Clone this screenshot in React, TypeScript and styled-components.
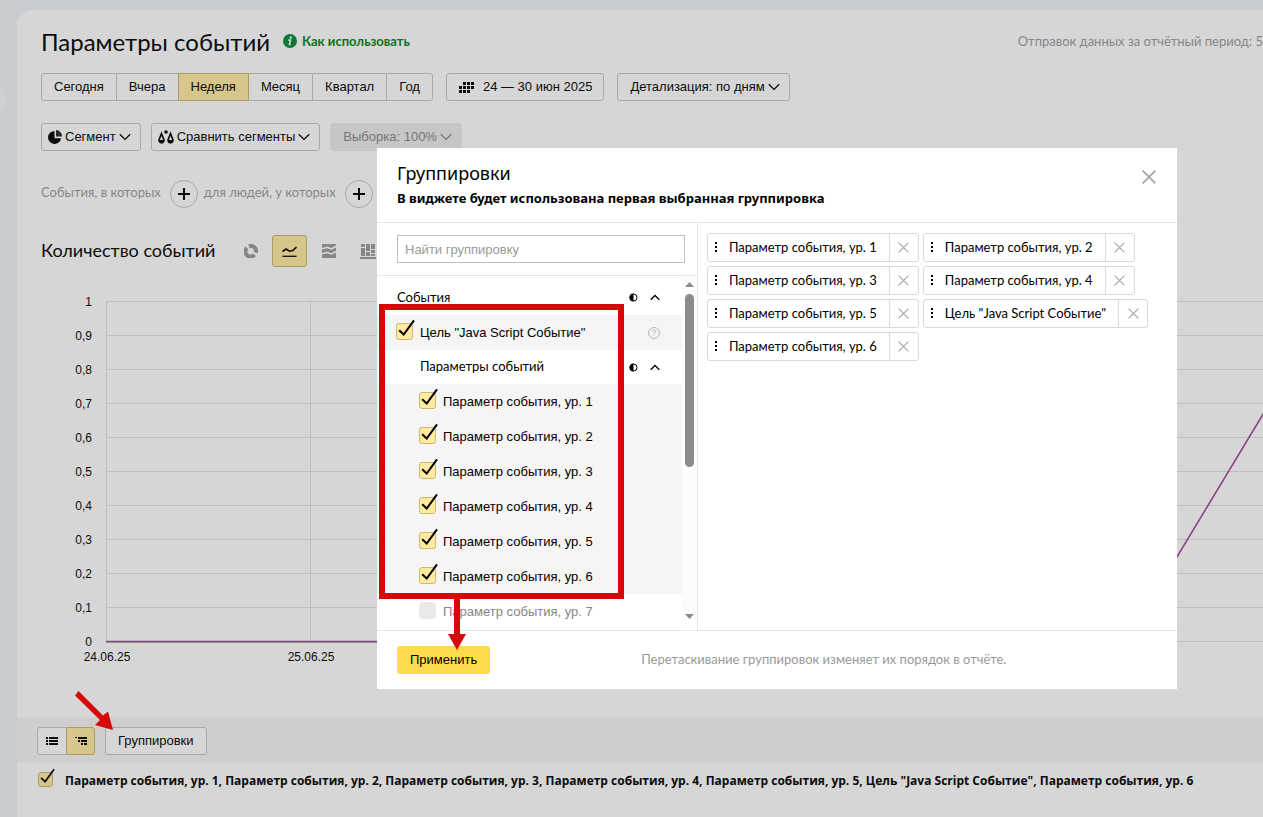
import React, { useState } from "react";
import styled, { createGlobalStyle, css } from "styled-components";

const ui = `"Liberation Sans", Arial, sans-serif`;
const brand = `Lato, "Noto Sans", sans-serif`;
const display = `"Noto Sans", "Open Sans", sans-serif`;

const GlobalStyle = createGlobalStyle`
  * { box-sizing: border-box; }
  body { margin: 0; background: #c9cdd2; color: #0c0c0c; font: 13px/18px ${ui}; overflow: hidden; }
  button, input { font: inherit; color: inherit; }
  h1, h2, p { margin: 0; }
  svg { display: block; flex: none; }
`;

const Page = styled.div`
  position: relative;
  min-height: 100vh;
  padding: 10px 0 0 17px;
  overflow: hidden;
`;
const MenuHandle = styled.button`
  position: absolute;
  left: -30px;
  top: 82px;
  width: 36px;
  height: 36px;
  border: 0;
  border-radius: 18px;
  background: #cfd1d5;
`;
const Report = styled.main`
  min-height: calc(100vh - 10px);
  background: #d6d6d6;
  border-top-left-radius: 16px;
`;
const Section = styled.div`
  padding-left: 24px;
`;
const Header = styled.header`
  display: flex;
  align-items: center;
  height: 63px;
  padding-bottom: 1px;
  white-space: nowrap;
  font-family: ${brand};
`;
const Title = styled.h1`
  padding-top: 2px;
  font-size: 24px;
  line-height: 32px;
  font-weight: 400;
`;
const HelpLink = styled.a`
  display: flex;
  align-items: center;
  gap: 5px;
  margin-left: 13px;
  color: #0c7223;
  font-size: 13px;
  font-weight: 700;
  text-decoration: none;
`;
const SentInfo = styled.span`
  margin-left: auto;
  color: #868686;
  font-size: 13px;
`;
const Toolbar = styled.div<{ $gap: number }>`
  display: flex;
  gap: ${(p) => p.$gap}px;
  margin-bottom: 22px;
`;
const Segmented = styled.div`
  display: flex;
`;
const Button = styled.button<{ $active?: boolean; $tight?: boolean }>`
  display: flex;
  align-items: center;
  gap: 3px;
  height: 28px;
  padding: 0 9px 0 ${(p) => (p.$tight ? 6 : 12)}px;
  border: 1px solid #a9a9a9;
  border-radius: 3px;
  background: transparent;
  white-space: nowrap;
  ${(p) => p.$active && css`
    background: #d6c68c;
    border-color: #ab9c66;
  `}
  &:disabled {
    border-color: #c6c6c6;
    background: #c6c6c6;
    color: #777;
  }
  ${Segmented} & {
    border-radius: 0;
    margin-left: -1px;
    padding: 0 12px;
    position: relative;
    z-index: ${(p) => (p.$active ? 1 : 0)};
  }
  ${Segmented} &:first-child {
    margin-left: 0;
    border-radius: 3px 0 0 3px;
  }
  ${Segmented} &:last-child {
    border-radius: 0 3px 3px 0;
  }
`;
const DateText = styled.span`
  margin: 0 2px 0 6px;
`;
const Conditions = styled.div`
  display: flex;
  align-items: center;
  gap: 9px;
  margin-top: 29px;
  color: #868686;
  font-family: ${brand};
`;
const ConditionText = styled.span`
  margin-bottom: 4px;
  & + button + & { margin-left: -3px; }
`;
const RoundButton = styled.button`
  display: grid;
  place-items: center;
  width: 28px;
  height: 28px;
  padding: 0;
  border: 1px solid #a9a9a9;
  border-radius: 50%;
  background: transparent;
`;
const ChartHead = styled.div`
  display: flex;
  align-items: center;
  height: 32px;
  margin-top: 27px;
`;
const ChartTitle = styled.h2`
  margin: 0 18px 2px 0;
  font: 400 18px/24px ${brand};
`;
const ChartType = styled.button<{ $active?: boolean }>`
  display: grid;
  place-items: center;
  width: 35px;
  height: 32px;
  margin-right: 4px;
  padding: 0;
  border: 1px solid ${(p) => (p.$active ? "#ab9c66" : "transparent")};
  border-radius: 3px;
  background: ${(p) => (p.$active ? "#d6c68c" : "transparent")};
  color: ${(p) => (p.$active ? "#0c0c0c" : "#868686")};
`;
const ChartArea = styled.div`
  height: 450px;
  overflow: hidden;
`;
const TableBar = styled.div`
  display: flex;
  align-items: center;
  gap: 10px;
  height: 46px;
  padding: 2px 0 0 20px;
  background: #cfcecc;
`;
const ViewButton = styled(Button)`
  background: ${(p) => (p.$active ? "#d6c68c" : "#d6d6d6")};
  justify-content: center;
  ${Segmented} & {
    width: 30px;
    padding: 0;
  }
  ${Segmented} &:last-child {
    width: 29px;
  }
`;
const BarButton = styled(Button)`
  padding: 0 12px;
  background: #d6d6d6;
`;
const LegendRow = styled.label`
  display: flex;
  align-items: center;
  gap: 12px;
  height: 35px;
  padding-left: 21px;
  font: 700 12px/18px "Open Sans", "Noto Sans", sans-serif;
  white-space: nowrap;
`;

const Dialog = styled.section`
  position: absolute;
  left: 377px;
  top: 148px;
  width: 800px;
  background: #fff;
  color: #000;
`;
const DialogHead = styled.header`
  display: flex;
  justify-content: space-between;
  height: 75px;
  padding: 13px 20px 0;
  border-bottom: 1px solid #e5e5e5;
  font-family: ${display};
`;
const DialogTitle = styled.h2`
  font-size: 18px;
  line-height: 24px;
  font-weight: 400;
`;
const DialogNote = styled.p`
  font-size: 13px;
  line-height: 26px;
  font-weight: 700;
`;
const PlainButton = styled.button`
  display: grid;
  place-items: center;
  padding: 0;
  border: 0;
  background: transparent;
  color: #a3a3a3;
`;
const CloseButton = styled(PlainButton)`
  width: 16px;
  height: 32px;
`;
const DialogBody = styled.div`
  display: flex;
  height: 407px;
`;
const Picker = styled.div`
  display: flex;
  flex-direction: column;
  width: 321px;
  border-right: 1px solid #e5e5e5;
`;
const SearchBox = styled.div`
  padding: 12px 12px 12px 20px;
  border-bottom: 1px solid #e5e5e5;
`;
const SearchInput = styled.input`
  display: block;
  width: 100%;
  height: 28px;
  padding: 0 7px;
  border: 1px solid #bfbfbf;
  outline: 0;
  font-family: ${ui};
  &::placeholder { color: #999; opacity: 1; }
`;
const ListWrap = styled.div`
  display: flex;
  flex: 1;
`;
const List = styled.div`
  flex: 1;
  padding-top: 4px;
`;
const ListRow = styled.div<{ $level: number; $shade?: boolean }>`
  display: flex;
  align-items: center;
  height: 35px;
  padding: 0 22px 0 ${(p) => 19 + p.$level * 23}px;
  background: ${(p) => (p.$shade ? "#f6f5f3" : "#fff")};
`;
const SubHead = styled(ListRow)`
  height: 34px;
`;
const GroupName = styled.span`
  flex: 1;
  padding: 0 0 2px 1px;
  font-family: ${brand};
`;
const OptionLabel = styled.label<{ $muted?: boolean }>`
  display: flex;
  flex: 1;
  align-items: center;
  gap: 7px;
  color: ${(p) => (p.$muted ? "#868686" : "#000")};
`;
const RowIcons = styled.span`
  display: flex;
  align-items: center;
  gap: 12px;
`;
const ScrollBar = styled.div`
  display: flex;
  flex-direction: column;
  align-items: center;
  width: 15px;
  height: 350px;
  padding: 6px 0 7px;
  background: #fcfcfc;
  color: #8b8b8b;
`;
const Thumb = styled.div`
  width: 9px;
  height: 173px;
  margin: 7px 0 auto;
  border-radius: 5px;
  background: #8b8b8b;
`;
const Chips = styled.div`
  display: flex;
  flex: 1;
  flex-wrap: wrap;
  align-content: flex-start;
  gap: 4px;
  padding: 10px 9px;
`;
const Chip = styled.div`
  display: flex;
  height: 29px;
  border: 1px solid #d9d9d9;
  border-radius: 3px;
  font-family: ${brand};
`;
const ChipLabel = styled.span`
  display: flex;
  align-items: center;
  gap: 12px;
  padding: 0 12px 1px 7px;
  white-space: nowrap;
`;
const ChipRemove = styled(PlainButton)`
  width: 29px;
  border-left: 1px solid #d9d9d9;
`;
const DialogFoot = styled.footer`
  display: flex;
  align-items: center;
  gap: 151px;
  height: 59px;
  padding: 0 20px;
  border-top: 1px solid #e5e5e5;
`;
const ApplyButton = styled.button`
  height: 28px;
  padding: 0 13px;
  border: 0;
  border-radius: 3px;
  background: #ffdb4d;
`;
const DragHint = styled.span`
  padding-bottom: 2px;
  color: #999;
  font-family: ${brand};
  white-space: nowrap;
`;

const CheckFrame = styled.span<{ $size: number }>`
  position: relative;
  flex: none;
  width: ${(p) => p.$size}px;
  height: ${(p) => p.$size}px;
  margin-bottom: 3px;
`;
const CheckInput = styled.input<{ $dim?: boolean }>`
  appearance: none;
  display: block;
  width: 100%;
  height: 100%;
  margin: 0;
  border: 1px solid #e9e9e9;
  border-radius: 3px;
  background: #e9e9e9;
  &:checked {
    border-color: ${(p) => (p.$dim ? "#ab9c66" : "#ccb872")};
    background: ${(p) => (p.$dim ? "#d6c68c" : "#ffeba0")};
  }
`;
const Tick = styled.svg`
  position: absolute;
  left: 2px;
  top: -4px;
  pointer-events: none;
`;
const Frame = styled.div`
  position: absolute;
  left: 379px;
  top: 304px;
  width: 245px;
  height: 295px;
  border: 6px solid #d60808;
  pointer-events: none;
`;
const Arrow = styled.svg<{ $x: number; $y: number }>`
  position: absolute;
  left: ${(p) => p.$x}px;
  top: ${(p) => p.$y}px;
  pointer-events: none;
`;

const Chevron = () => (
  <svg width="12" height="8" viewBox="0 0 12 8" fill="none" stroke="currentColor" strokeWidth="1.3">
    <path d="M.8 1.2 6 6.4l5.200-5.200" />
  </svg>
);
const Caret = () => (
  <svg width="10" height="7" viewBox="0 0 10 7" fill="none" stroke="#000" strokeWidth="1.3">
    <path d="M.7 5.800 5 1.500l4.300 4.300" />
  </svg>
);
const Half = () => (
  <svg width="9" height="9" viewBox="0 0 9 9">
    <circle cx="4.500" cy="4.500" r="3.500" fill="none" stroke="#000" />
    <path d="M4.500.5a4 4 0 0 0 0 8z" />
  </svg>
);
const Cross = ({ size, weight }: { size: number; weight: number }) => (
  <svg width={size} height={size} viewBox="0 0 14 14" stroke="currentColor" strokeWidth={weight}>
    <path d="m.7.7 12.600 12.600M13.300.7.7 13.300" />
  </svg>
);

function Check({ checked, dim, size = 17, disabled }: { checked?: boolean; dim?: boolean; size?: number; disabled?: boolean }) {
  const [on, setOn] = useState(!!checked);
  return (
    <CheckFrame $size={size}>
      <CheckInput type="checkbox" $dim={dim} checked={on} disabled={disabled} onChange={() => setOn(!on)} />
      {on && (
        <Tick width={size} height={size} viewBox="0 0 17 17" fill="none" stroke={dim ? "#0c0c0c" : "#000"} strokeWidth="2">
          <path d="m1.200 11.200 4.500 4.300L16 1.300" />
        </Tick>
      )}
    </CheckFrame>
  );
}

const periods = ["Сегодня", "Вчера", "Неделя", "Месяц", "Квартал", "Год"];
const levels = [1, 2, 3, 4, 5, 6];
const goal = 'Цель "Java Script Событие"';
const param = (n: number) => `Параметр события, ур. ${n}`;
const selected = [param(1), param(2), param(3), param(4), param(5), goal, param(6)];
const ticks = ["1", "0,9", "0,8", "0,7", "0,6", "0,5", "0,4", "0,3", "0,2", "0,1", "0"];
const days = ["24.06.25", "25.06.25"];
const dots = [[1, 4], [0, 4], [0, 3]];

function Chart() {
  return (
    <svg width="1360" height="400" fontFamily={ui} fontSize="12" fill="#0c0c0c" role="img" aria-label="Количество событий">
      {ticks.map((t, i) => (
        <g key={t}>
          <line x1="89" x2="1313" y1={34.5 + i * 34} y2={34.5 + i * 34} stroke="#bfbfbf" />
          <text x="75" y={39 + i * 34} textAnchor="end">{t}</text>
        </g>
      ))}
      {days.map((d, i) => (
        <g key={d}>
          <line x1={89.5 + i * 204} x2={89.5 + i * 204} y1="34" y2="374" stroke="#bfbfbf" />
          <text x={90 + i * 204} y="394" textAnchor="middle">{d}</text>
        </g>
      ))}
      <polyline points="89,374.500 1109,374.500 1313,36" fill="none" stroke="#8a3a8a" strokeWidth="1.500" />
      <line x1="89" x2="1109" y1="375" y2="375" stroke="#666" />
    </svg>
  );
}

export default function App() {
  return (
    <>
      <GlobalStyle />
      <Page>
        <MenuHandle aria-label="Меню" />
        <Report>
          <Section>
            <Header>
              <Title>Параметры событий</Title>
              <HelpLink href="#help">
                <svg width="14" height="14" viewBox="0 0 14 14">
                  <circle cx="7" cy="7" r="7" fill="#0c7a33" />
                  <circle cx="7.800" cy="3.400" r="1.200" fill="#d6d6d6" />
                  <path d="M5.200 6h2.200l-1 4.600h1.400" fill="none" stroke="#d6d6d6" strokeWidth="1.500" />
                </svg>
                Как использовать
              </HelpLink>
              <SentInfo>Отправок данных за отчётный период: 5</SentInfo>
            </Header>
            <Toolbar $gap={13}>
              <Segmented>
                {periods.map((p) => <Button key={p} $active={p === "Неделя"}>{p}</Button>)}
              </Segmented>
              <Button>
                <svg width="15" height="11" viewBox="0 0 15 11" fill="#0c0c0c">
                  {dots.map(([from, to], r) =>
                    [0, 1, 2, 3].filter((c) => c >= from && c < to).map((c) => (
                      <rect key={`${r}${c}`} x={c * 4} y={r * 4} width="3" height="3" />
                    )),
                  )}
                </svg>
                <DateText>24 — 30 июн 2025</DateText>
              </Button>
              <Button>Детализация: по дням <Chevron /></Button>
            </Toolbar>
            <Toolbar $gap={10}>
              <Button $tight>
                <svg width="14" height="14" viewBox="0 0 14 14" fill="#0c0c0c">
                  <path d="M6.500 1A6.500 6.500 0 1 0 13 8.200H6.500z" />
                  <path d="M8 0v6.500h6A6.300 6.300 0 0 0 8 0z" opacity=".85" />
                </svg>
                Сегмент <Chevron />
              </Button>
              <Button $tight>
                <svg width="16" height="14" viewBox="0 0 16 14" fill="none" stroke="#0c0c0c">
                  <path d="M3.500 3.500 1.200 9.500a2.400 2.400 0 1 0 4.600 0zM12.500 3.500l-2.300 6a2.400 2.400 0 1 0 4.600 0z" strokeWidth="1.700" />
                  <path d="M1 10h5v2L3.500 13.500 1 12zM10 10h5v2l-2.500 1.500L10 12z" fill="#0c0c0c" stroke="none" />
                  <circle cx="8" cy="2" r="1.800" fill="#0c0c0c" stroke="none" />
                </svg>
                Сравнить сегменты <Chevron />
              </Button>
              <Button disabled>Выборка: 100% <Chevron /></Button>
            </Toolbar>
            <Conditions>
              <ConditionText>События, в которых</ConditionText>
              <RoundButton aria-label="Добавить условие на события">
                <svg width="12" height="12" viewBox="0 0 12 12" stroke="#0c0c0c" strokeWidth="2"><path d="M6 0v12M0 6h12" /></svg>
              </RoundButton>
              <ConditionText>для людей, у которых</ConditionText>
              <RoundButton aria-label="Добавить условие на людей">
                <svg width="12" height="12" viewBox="0 0 12 12" stroke="#0c0c0c" strokeWidth="2"><path d="M6 0v12M0 6h12" /></svg>
              </RoundButton>
            </Conditions>
            <ChartHead>
              <ChartTitle>Количество событий</ChartTitle>
              <ChartType aria-label="Круговая диаграмма">
                <svg width="14" height="14" viewBox="0 0 14 14" fill="none" stroke="currentColor" strokeWidth="4">
                  <path d="M5 2.400A5 5 0 0 1 11.700 8.700M10.300 10.800A5 5 0 1 1 3 4" />
                </svg>
              </ChartType>
              <ChartType $active aria-label="Линии">
                <svg width="15" height="11" viewBox="0 0 15 11" fill="none" stroke="currentColor">
                  <path d="M.5 5.500 4 3l3.500 2.200 3.200-.6L14.500 1" strokeWidth="1.600" />
                  <path d="M.5 10.300h14" strokeWidth="1.300" />
                </svg>
              </ChartType>
              <ChartType aria-label="Области">
                <svg width="14" height="14" viewBox="0 0 14 14" fill="currentColor">
                  <path d="M0 0h14v1.500L9.500 4 5 2.500 0 4zM0 5.500l5-1.300 4.500 1.500L14 3.500v3L9.500 9 5 7.500 0 9zM0 10.500l5-1.300 4.500 1.500L14 8.500V14H0z" />
                </svg>
              </ChartType>
              <ChartType aria-label="Колонки">
                <svg width="16" height="15" viewBox="0 0 16 15" fill="currentColor">
                  <path d="M1 0h4v3H1zM1 4h4v8H1zM6 0h4v7H6zM6 8h4v4H6zM11 0h4v5h-4zM11 6h4v3h-4zM11 10h4v2h-4zM0 13h16v2H0z" />
                </svg>
              </ChartType>
            </ChartHead>
          </Section>
          <ChartArea><Chart /></ChartArea>
          <TableBar>
            <Segmented>
              <ViewButton aria-label="Список">
                <svg width="12" height="8" viewBox="0 0 12 8" fill="currentColor">
                  <path d="M0 0h2v2H0zM3 0h9v2H3zM0 3h2v2H0zM3 3h9v2H3zM0 6h2v2H0zM3 6h9v2H3z" />
                </svg>
              </ViewButton>
              <ViewButton $active aria-label="Дерево">
                <svg width="12" height="8" viewBox="0 0 12 8" fill="currentColor">
                  <path d="M0 0h2v1H0zM3 0h9v2H3zM3 3h2v2H3zM6 3h6v2H6zM6 6h2v2H6zM9 6h3v2H9z" />
                </svg>
              </ViewButton>
            </Segmented>
            <BarButton>Группировки</BarButton>
          </TableBar>
          <LegendRow>
            <Check checked dim size={15} />
            {selected.join(", ")}
          </LegendRow>
        </Report>

        <Dialog role="dialog" aria-labelledby="dialog-title">
          <DialogHead>
            <div>
              <DialogTitle id="dialog-title">Группировки</DialogTitle>
              <DialogNote>В виджете будет использована первая выбранная группировка</DialogNote>
            </div>
            <CloseButton aria-label="Закрыть"><Cross size={14} weight={1.7} /></CloseButton>
          </DialogHead>
          <DialogBody>
            <Picker>
              <SearchBox><SearchInput type="text" placeholder="Найти группировку" aria-label="Найти группировку" /></SearchBox>
              <ListWrap>
                <List>
                  <ListRow $level={0}>
                    <GroupName>События</GroupName>
                    <RowIcons><Half /><Caret /></RowIcons>
                  </ListRow>
                  <ListRow $level={0} $shade>
                    <OptionLabel><Check checked />{goal}</OptionLabel>
                    <svg width="12" height="12" viewBox="0 0 12 12" fill="none" stroke="#b5b5b5">
                      <circle cx="6" cy="6" r="5.500" />
                      <path d="M4.300 4.800c0-2.300 3.400-2.200 3.400-.2C7.700 5.800 6 5.800 6 7.200M6 8.200v1" />
                    </svg>
                  </ListRow>
                  <SubHead $level={1}>
                    <GroupName>Параметры событий</GroupName>
                    <RowIcons><Half /><Caret /></RowIcons>
                  </SubHead>
                  {levels.map((n) => (
                    <ListRow key={n} $level={1} $shade>
                      <OptionLabel><Check checked />{param(n)}</OptionLabel>
                    </ListRow>
                  ))}
                  <ListRow $level={1}>
                    <OptionLabel $muted><Check disabled />{param(7)}</OptionLabel>
                  </ListRow>
                </List>
                <ScrollBar>
                  <svg width="9" height="5" fill="currentColor"><path d="M4.500 0 9 5H0z" /></svg>
                  <Thumb />
                  <svg width="9" height="5" fill="currentColor"><path d="M4.500 5 0 0h9z" /></svg>
                </ScrollBar>
              </ListWrap>
            </Picker>
            <Chips>
              {selected.map((s) => (
                <Chip key={s}>
                  <ChipLabel>
                    <svg width="2" height="11" fill="#000"><path d="M0 0h2v2H0zM0 4h2v2H0zM0 8h2v2H0z" /></svg>
                    {s}
                  </ChipLabel>
                  <ChipRemove aria-label={`Удалить: ${s}`}><Cross size={11} weight={1.4} /></ChipRemove>
                </Chip>
              ))}
            </Chips>
          </DialogBody>
          <DialogFoot>
            <ApplyButton>Применить</ApplyButton>
            <DragHint>Перетаскивание группировок изменяет их порядок в отчёте.</DragHint>
          </DialogFoot>
        </Dialog>

        <Frame />
        <Arrow $x={448} $y={598} width="18" height="53" fill="#d60808"><path d="M6 0h6v36h6L9 52 0 36h6z" /></Arrow>
        <Arrow $x={70} $y={688} width="46" height="46" fill="#d60808"><path d="M8.500 3 33 27.500l5-4L43 42 25 37l5-5L5 7.500z" /></Arrow>
      </Page>
    </>
  );
}
